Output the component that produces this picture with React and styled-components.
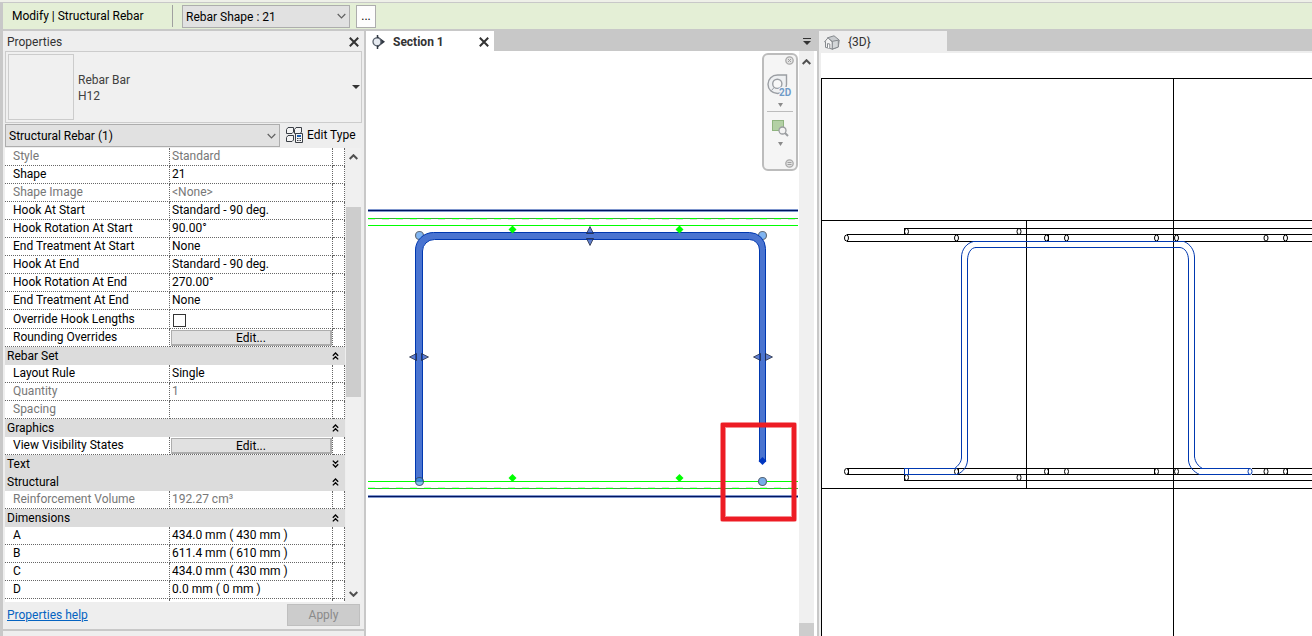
import React from 'react';
import styled, { createGlobalStyle } from 'styled-components';

const ROWS = [
  { name: 'Style', value: 'Standard', muted: true },
  { name: 'Shape', value: '21' },
  { name: 'Shape Image', value: '<None>', muted: true },
  { name: 'Hook At Start', value: 'Standard - 90 deg.' },
  { name: 'Hook Rotation At Start', value: '90.00°' },
  { name: 'End Treatment At Start', value: 'None' },
  { name: 'Hook At End', value: 'Standard - 90 deg.' },
  { name: 'Hook Rotation At End', value: '270.00°' },
  { name: 'End Treatment At End', value: 'None' },
  { name: 'Override Hook Lengths', type: 'check' },
  { name: 'Rounding Overrides', type: 'edit' },
  { group: 'Rebar Set', open: true },
  { name: 'Layout Rule', value: 'Single' },
  { name: 'Quantity', value: '1', muted: true },
  { name: 'Spacing', value: '', muted: true },
  { group: 'Graphics', open: true },
  { name: 'View Visibility States', type: 'edit' },
  { group: 'Text', open: false },
  { group: 'Structural', open: true },
  { name: 'Reinforcement Volume', value: '192.27 cm³', muted: true },
  { group: 'Dimensions', open: true },
  { name: 'A', value: '434.0 mm ( 430 mm )' },
  { name: 'B', value: '611.4 mm ( 610 mm )' },
  { name: 'C', value: '434.0 mm ( 430 mm )' },
  { name: 'D', value: '0.0 mm ( 0 mm )' },
  { name: '', value: '' },
];

const Chevron = ({ up, bold }) => (
  <svg width="9" height="6" viewBox="0 0 9 6" fill="none" stroke={bold ? '#505050' : '#606060'} strokeWidth={bold ? 2 : 1.2}>
    <path d={up ? 'M0.7 5 L4.5 1.2 L8.3 5' : 'M0.7 1 L4.5 4.8 L8.3 1'} />
  </svg>
);

const Caret = ({ size = 7, color = '#333' }) => (
  <svg width={size} height="4" viewBox="0 0 8 4" preserveAspectRatio="none">
    <path d="M0 0 H8 L4 4 Z" fill={color} />
  </svg>
);

const Cross = () => (
  <svg width="10" height="10" viewBox="0 0 10 10" stroke="#333" strokeWidth="2">
    <path d="M0.8 0.8 L9.2 9.2 M9.2 0.8 L0.8 9.2" />
  </svg>
);

const DoubleChevron = ({ open }) => (
  <svg width="7" height="8" viewBox="0 0 7 8" fill="none" stroke="#000" strokeWidth="1.3">
    <path d={open ? 'M0.8 3.7 L3.5 1 L6.2 3.7 M0.8 7.4 L3.5 4.7 L6.2 7.4' : 'M0.8 0.6 L3.5 3.3 L6.2 0.6 M0.8 4.3 L3.5 7 L6.2 4.3'} />
  </svg>
);

const EditTypeIcon = () => (
  <svg width="17" height="16" viewBox="0 0 17 16" fill="#f4f4f4" stroke="#3a3f46" strokeWidth="1">
    <path d="M0.5 2.5 L2 0.5 H7.5 V5 L6 6.5 H0.5 Z" />
    <path d="M8.5 2.5 L10 0.5 H15.5 V5 L14 6.5 H8.5 Z" />
    <path d="M0.5 10.5 L2 8.5 H7.5 V13 L6 14.5 H0.5 Z" />
    <path d="M9.5 6.5 H16.5 V15.5 H9.5 Z" />
    <path d="M11 9 H15" stroke="#1c5fb0" strokeWidth="2" />
    <path d="M11 11.5 H15 M11 13.5 H15" strokeDasharray="1 0.5" />
  </svg>
);

const SectionIcon = () => (
  <svg width="13" height="14" viewBox="0 0 13 14">
    <path d="M5.5 1.2 L13 6.8 L5.5 12.4 Z" fill="#2f3640" />
    <circle cx="5" cy="6.8" r="4" fill="#e6eaf0" stroke="#59616c" strokeWidth="1.3" />
    <path d="M5.5 0 V3 M5.5 10.6 V14" stroke="#2f3640" strokeWidth="1.5" />
  </svg>
);

const HouseIcon = () => (
  <svg width="16" height="15" viewBox="0 0 16 15" stroke="#85898d" strokeLinejoin="round">
    <path d="M3.5 2.8 L10 0.8 L15.2 5 L14.3 12 L8 14.2 L8.8 6.8 Z" fill="#c9cccf" />
    <path d="M8.3 6.3 L14.3 5.2 V12 L8 14.2 Z" fill="#d4d7d9" />
    <path d="M0.6 6.8 L4 2.8 L8.2 7 V14 L1.5 12.4 V6.6 Z" fill="#f2f2f2" />
    <path d="M3.5 12.8 V8.6 L5.8 9 V13.4" fill="#fff" />
  </svg>
);

const WheelIcon = () => (
  <svg width="26" height="24" viewBox="0 0 26 24" fill="none" stroke="#9b9ea3">
    <path d="M10.5 1 H19.5 V10.5 C19.5 16 15.5 19.5 10.5 19.5 C5 19.5 1 15.5 1 10.2 C1 5 5 1 10.5 1 Z" fill="#eef0f2" strokeWidth="1.4" />
    <circle cx="10.3" cy="9.8" r="4.6" fill="#f8f8f8" strokeWidth="1.4" />
    <path d="M7.3 13.3 L4.5 16.5 M13.3 13.3 L16 16" />
    <text x="12" y="22" fontFamily="Roboto, sans-serif" fontSize="10" fontWeight="700" fill="#6f9bc8" stroke="#f5f5f5" strokeWidth="2" paintOrder="stroke">2D</text>
  </svg>
);

const ZoomIcon = () => (
  <svg width="17" height="17" viewBox="0 0 17 17">
    <rect x="0.5" y="0.5" width="11" height="10" fill="#b3d0a5" stroke="#8fb47f" />
    <circle cx="10.5" cy="10.5" r="3.5" fill="#f3f3f3" stroke="#9a9da0" strokeWidth="1.3" />
    <path d="M13 13 L16 16" stroke="#9a9da0" strokeWidth="2" />
  </svg>
);

const RoundMark = ({ d }) => (
  <svg width="9" height="9" viewBox="0 0 9 9">
    <circle cx="4.5" cy="4.5" r="3.7" fill="#e2e2e2" stroke="#aaa" strokeWidth="1.3" />
    <path d={d} stroke="#a0a0a0" fill="none" />
  </svg>
);

const HorizontalRule = ({ y }) => (
  <>
    <path d={`M368 ${y} H798`} stroke="#7f96ce" strokeWidth="3" />
    <path d={`M368 ${y} H798`} stroke="#001560" />
  </>
);

const SectionDrawing = () => (
  <svg width="100%" height="100%" role="img" aria-label="Section 1">
    <g transform="translate(-366 -51)" fill="none">
      <g shapeRendering="crispEdges">
        <HorizontalRule y={210.5} />
        <HorizontalRule y={496.5} />
        <path d="M368 219.5 H798 M368 487.5 H798" stroke="#dcdcdc" strokeDasharray="7 7" />
        <path d="M368 218.5 H798 M368 225.5 H798 M368 481.5 H798 M368 488.5 H798" stroke="#00ff00" />
        <path d="M368 218.5 H798 M368 488.5 H798" stroke="#35b035" strokeDasharray="7 7" strokeDashoffset="7" />
      </g>
      {[[419.5, 235.5], [762.5, 235.5]].map(([x, y]) => (
        <circle key={x} cx={x} cy={y} r="4" fill="#80b5f2" stroke="#666f7a" strokeWidth="1.2" />
      ))}
      <path
        d="M415.5 481 V250 A18 17.5 0 0 1 433.5 232.5 H749.5 A16 16 0 0 1 765.5 248.5 V461.5 H759.5 V250 A10 10.5 0 0 0 749.5 239.5 H434.5 A12 11.5 0 0 0 422.5 251 V481 Z"
        fill="#4a74d0"
        stroke="#0038b0"
      />
      <circle cx="419.5" cy="481.5" r="4" fill="#4096e8" fillOpacity="0.65" stroke="#2c3a50" strokeOpacity="0.7" strokeWidth="1.2" />
      <circle cx="762.5" cy="481.5" r="4" fill="#78aee8" stroke="#566477" strokeWidth="1.2" />
      {[[512.5, 229.5], [679.5, 229.5], [512.5, 478], [679.5, 478]].map(([x, y]) => (
        <path key={`${x}-${y}`} d={`M${x} ${y - 4} L${x + 4} ${y} L${x} ${y + 4} L${x - 4} ${y} Z`} fill="#00ff00" />
      ))}
      <g fill="#1c49b8" fillOpacity="0.7" stroke="#20283c" strokeOpacity="0.75">
        <path d="M590 226.5 L593.5 233.5 H586.5 Z" />
        <path d="M590 245.5 L593.5 238.5 H586.5 Z" />
        {[419, 763].map((x) => (
          <path key={x} d={`M${x - 9.5} 357 L${x - 2.5} 353.5 V360.5 Z M${x + 9.5} 357 L${x + 2.5} 353.5 V360.5 Z`} />
        ))}
      </g>
      <path d="M762.5 457 L766.5 461 L762.5 465 L758.5 461 Z" fill="#0036c0" />
      <rect x="723" y="425" width="71" height="94" stroke="#ed1c24" strokeOpacity="0.5" strokeWidth="6" strokeLinejoin="round" />
      <rect x="723" y="425" width="71" height="94" stroke="#ed1c24" strokeWidth="4" />
    </g>
  </svg>
);

const RING_X = [956.5, 1046.5, 1066.5, 1156.5, 1176.5, 1266, 1285.5];

const ModelDrawing = () => (
  <svg width="100%" height="100%" role="img" aria-label="3D view">
    <g transform="translate(-821 -53)" fill="none" stroke="#000">
      <g shapeRendering="crispEdges">
        <path d="M821.5 2000 V78.5 H2400 M1173.5 78 V2000 M821 220.5 H2400 M1026.5 220 V488 M821 488.5 H2400" />
        <path d="M904.5 234 V228.5 H2400 M847 234.5 H2400 M847 241.5 H973 M1184 241.5 H2400" />
        <path d="M847 468.5 H904 M957 468.5 H1202 M1252 468.5 H2400 M847 474.5 H904 M957 474.5 H1199 M1252 474.5 H2400 M904.5 474 V480.5 H2400" />
        <path d="M848.5 468 V474 M958.5 468 V474 M1048.5 235 V241 M1048.5 468 V474 M1154.5 468 V474 M1287.5 468 V474" />
      </g>
      {[...RING_X, 846.5].map((x) => (
        <g key={x}>
          <ellipse cx={x} cy="238" rx="2" ry="3" />
          <ellipse cx={x} cy="471.5" rx="2" ry="3" />
        </g>
      ))}
      {[906.5, 1019].map((x) => (
        <g key={x}>
          <ellipse cx={x} cy="231.5" rx="2" ry="3" />
          <ellipse cx={x} cy="477.5" rx="2" ry="3" />
        </g>
      ))}
      <g stroke="#0038b0">
        <g shapeRendering="crispEdges">
          <path d="M973 241.5 H1184 M975 247.5 H1180" />
          <path d="M961.5 257 V458 M967.5 260 V461 M1188.5 260 V461 M1194.5 257 V457" />
          <path d="M957 468.5 H904.5 V474.5 H957 M908.5 468 V474 M1200 468.5 H1250 M1199 474.5 H1250" />
        </g>
        <path d="M973.5 241.5 C967 243 961.5 249 961.5 257.5 M976 247.5 C971 247.5 967.5 253 967.5 260.5" />
        <path d="M1184 241.5 C1190 244 1194.5 250 1194.5 257.5 M1180 247.5 C1185 248 1188.5 253 1188.5 260.5" />
        <path d="M961.5 457.5 C961.5 462 958 466 954.5 468.5 M967.5 460.5 C967 467 963 472 957 474.5" />
        <path d="M1188.5 460.5 C1189 467 1194 472 1199.5 474.5 M1194.5 456.5 C1195 462 1198 466 1202.5 468.5" />
        <ellipse cx="1250" cy="471.5" rx="2" ry="3" />
      </g>
    </g>
  </svg>
);

const PropertyValue = ({ row, id }) => {
  if (row.type === 'check') return <CheckBox id={id} type="checkbox" />;
  if (row.type === 'edit') return <EditButton id={id} type="button">Edit...</EditButton>;
  return row.value;
};

const PropertyRow = ({ row, id }) => {
  if (row.group) {
    return (
      <tr>
        <GroupCell colSpan="3" scope="rowgroup">
          <GroupTitle>{row.group}<DoubleChevron open={row.open} /></GroupTitle>
        </GroupCell>
      </tr>
    );
  }
  return (
    <tr>
      <NameCell scope="row" $muted={row.muted} $tall={row.type === 'check'}>
        {row.type ? <label htmlFor={id}>{row.name}</label> : row.name}
      </NameCell>
      <ValueCell $muted={row.muted} $flush={row.type === 'edit'}><PropertyValue row={row} id={id} /></ValueCell>
      <ValueCell />
    </tr>
  );
};

const PropertiesPanel = () => (
  <Panel>
    <PanelTitle>
      <span>Properties</span>
      <IconButton type="button" aria-label="Close properties"><Cross /></IconButton>
    </PanelTitle>
    <TypeSelector type="button">
      <Thumbnail />
      <TypeName>Rebar Bar<br />H12</TypeName>
      <Caret size={8} />
    </TypeSelector>
    <FilterRow>
      <SelectBox>
        <Select aria-label="Category" defaultValue="rebar">
          <option value="rebar">Structural Rebar (1)</option>
        </Select>
        <Chevron />
      </SelectBox>
      <EditType type="button"><EditTypeIcon />Edit Type</EditType>
    </FilterRow>
    <ScrollArea>
      <TableClip>
        <PropertyTable>
          <colgroup><NameCol /><col /><ExtraCol /></colgroup>
          <tbody>
            {ROWS.map((row, i) => <PropertyRow key={i} row={row} id={`property-${i}`} />)}
          </tbody>
        </PropertyTable>
      </TableClip>
      <ScrollBar>
        <ScrollButton type="button" aria-label="Scroll up"><Chevron up bold /></ScrollButton>
        <Track><Thumb /></Track>
        <ScrollButton type="button" aria-label="Scroll down"><Chevron bold /></ScrollButton>
      </ScrollBar>
    </ScrollArea>
    <PanelFooter>
      <HelpLink href="#help">Properties help</HelpLink>
      <ApplyButton type="button" disabled>Apply</ApplyButton>
    </PanelFooter>
    <BottomStrip />
  </Panel>
);

const App = () => (
  <>
    <GlobalStyle />
    <Window>
      <RibbonEdge />
      <OptionsBar>
        <Mode>Modify | Structural Rebar</Mode>
        <ShapeBox>
          <Select aria-label="Rebar Shape" defaultValue="21">
            <option value="21">Rebar Shape : 21</option>
          </Select>
          <Chevron />
        </ShapeBox>
        <BrowseButton type="button" aria-label="Browse shapes">...</BrowseButton>
      </OptionsBar>
      <Workspace>
        <PropertiesPanel />
        <SectionPane>
          <TabBar>
            <Tab $active>
              <SectionIcon />
              <TabTitle>Section 1</TabTitle>
              <IconButton type="button" aria-label="Close Section 1"><Cross /></IconButton>
            </Tab>
            <TabMenu type="button" aria-label="Tab list"><Caret size={8} /></TabMenu>
          </TabBar>
          <SectionBody>
            <Canvas>
              <SectionDrawing />
              <NavBar>
                <NavMark type="button" aria-label="Close navigation bar"><RoundMark d="M3 3 L6 6 M6 3 L3 6" /></NavMark>
                <NavButton type="button" aria-label="Steering wheel"><WheelIcon /><Caret size={5} color="#8a8a8a" /></NavButton>
                <NavLine />
                <NavButton type="button" aria-label="Zoom"><ZoomIcon /><Caret size={5} color="#8a8a8a" /></NavButton>
                <NavMark type="button" aria-label="Navigation options"><RoundMark d="M2.5 3.5 H6.5 M2.5 5.5 H6.5" /></NavMark>
              </NavBar>
            </Canvas>
            <ViewScroll>
              <ScrollButton type="button" aria-label="Scroll view up"><Chevron up bold /></ScrollButton>
              <ViewThumb />
            </ViewScroll>
          </SectionBody>
        </SectionPane>
        <ModelPane>
          <TabBar>
            <Tab><HouseIcon /><TabTitle>{'{3D}'}</TabTitle></Tab>
          </TabBar>
          <ModelBody><ModelDrawing /></ModelBody>
        </ModelPane>
      </Workspace>
    </Window>
  </>
);

export default App;

const GlobalStyle = createGlobalStyle`
  * {
    box-sizing: border-box;
  }

  body {
    margin: 0;
    color: #000;
    font: 12px/16px "Segoe UI", Roboto, "Open Sans", sans-serif;
  }

  button, select, input {
    margin: 0;
    font: inherit;
    color: inherit;
  }

  svg {
    display: block;
    flex: none;
  }
`;

const Window = styled.div`
  display: flex;
  flex-direction: column;
  height: 100vh;
  background: #c8c8c8;
`;

const RibbonEdge = styled.div`
  flex: none;
  height: 3px;
  background: #eef0e8;
  border-bottom: 1px solid #c8c8c8;
`;

const OptionsBar = styled.div`
  display: flex;
  align-items: center;
  flex: none;
  height: 26px;
  margin-left: 3px;
  padding-left: 9px;
  background: #e4efd6;
`;

const Mode = styled.span`
  width: 161px;
  line-height: 22px;
  white-space: nowrap;
  border-right: 1px solid #a0a0a0;
`;

const SelectBox = styled.div`
  display: grid;
  flex: 1;
  height: 23px;
  align-items: center;

  svg {
    grid-area: 1 / 1;
    justify-self: end;
    margin-right: 4px;
    pointer-events: none;
  }
`;

const ShapeBox = styled(SelectBox)`
  flex: 0 0 168px;
  margin: 0 6px 0 9px;
`;

const Select = styled.select`
  grid-area: 1 / 1;
  width: 100%;
  height: 100%;
  padding: 1px 3px 0;
  appearance: none;
  background: #e1e1e1;
  border: 1px solid #adadad;
  border-radius: 0;
`;

const BrowseButton = styled.button`
  width: 20px;
  height: 23px;
  padding: 0;
  background: #fdfdfd;
  border: 1px solid #adadad;
`;

const Workspace = styled.main`
  display: flex;
  flex: 1;
  min-height: 0;
  padding: 2px 0 0 3px;
`;

const Panel = styled.aside`
  display: flex;
  flex-direction: column;
  flex: none;
  width: 361px;
  padding: 0 2px;
  margin-right: 2px;
  background: #eee;
`;

const PanelTitle = styled.div`
  display: flex;
  align-items: center;
  justify-content: space-between;
  flex: none;
  height: 20px;
  padding: 2px 3px 0 2px;
  color: #333;
`;

const IconButton = styled.button`
  padding: 0;
  background: none;
  border: 0;
`;

const TypeSelector = styled.button`
  display: flex;
  align-items: center;
  flex: none;
  height: 72px;
  padding: 0 1px 0 2px;
  text-align: left;
  background: #f0f0f0;
  border: 1px solid #ccc;
`;

const Thumbnail = styled.span`
  width: 66px;
  height: 66px;
  border: 1px solid #ccc;
`;

const TypeName = styled.span`
  flex: 1;
  padding: 2px 0 0 4px;
  color: #404040;
`;

const FilterRow = styled.div`
  display: flex;
  align-items: center;
  flex: none;
  height: 25px;
`;

const EditType = styled.button`
  display: flex;
  align-items: center;
  gap: 4px;
  flex: 0 0 82px;
  padding: 0 0 2px 6px;
  white-space: nowrap;
  background: none;
  border: 0;
`;

const ScrollArea = styled.div`
  display: flex;
  flex: 1;
  gap: 1px;
  min-height: 0;
  padding-right: 1px;
`;

const TableClip = styled.div`
  flex: 1;
  overflow: hidden;
  background: #fff;
`;

const PropertyTable = styled.table`
  width: 100%;
  table-layout: fixed;
  border-collapse: separate;
  border-spacing: 0;
`;

const NameCol = styled.col`
  width: 165px;
`;

const ExtraCol = styled.col`
  width: 12px;
`;

const NameCell = styled.th`
  height: ${({ $tall }) => ($tall ? 19 : 18)}px;
  padding: 0 0 1px 8px;
  font-weight: 400;
  text-align: left;
  white-space: nowrap;
  color: ${({ $muted }) => ($muted ? '#777' : '#000')};
  border-right: 1px dotted #666;
  border-bottom: 1px dotted #666;
`;

const ValueCell = styled.td`
  padding: 0 0 ${({ $flush }) => ($flush ? '0 1px' : '1px 2px')};
  white-space: nowrap;
  color: ${({ $muted }) => ($muted ? '#777' : '#000')};
  border-right: 1px dotted #666;
  border-bottom: 1px dotted #666;
`;

const GroupCell = styled.th`
  height: 18px;
  padding: 0 6px 0 2px;
  font-weight: 400;
  background: #dcdcdc;
`;

const GroupTitle = styled.span`
  display: flex;
  align-items: center;
  justify-content: space-between;
`;

const CheckBox = styled.input`
  display: block;
  width: 13px;
  height: 13px;
  margin: 3px 0 0 1px;
  appearance: none;
  background: #fff;
  border: 1px solid #333;
`;

const EditButton = styled.button`
  display: block;
  width: 100%;
  height: 16px;
  padding: 1px 0 0;
  line-height: 12px;
  background: #e1e1e1;
  border: solid #adadad;
  border-width: 1px 2px 2px 1px;
`;

const ScrollBar = styled.div`
  display: flex;
  flex-direction: column;
  width: 15px;
  background: #f0f0f0;
`;

const ScrollButton = styled.button`
  display: flex;
  align-items: center;
  justify-content: center;
  height: 17px;
  padding: 0;
  background: none;
  border: 0;
`;

const Track = styled.div`
  display: grid;
  grid-template-rows: 42fr 190fr 188fr;
  flex: 1;
`;

const Thumb = styled.div`
  grid-row: 2;
  background: #cdcdcd;
`;

const PanelFooter = styled.div`
  display: flex;
  align-items: center;
  justify-content: space-between;
  flex: none;
  height: 27px;
  padding: 0 2px 2px;
`;

const HelpLink = styled.a`
  color: #0563c1;
`;

const ApplyButton = styled.button`
  width: 73px;
  height: 22px;
  padding: 0;
  color: #8a8a8a;
  background: #ccc;
  border: 1px solid #bfbfbf;
`;

const BottomStrip = styled.div`
  flex: none;
  height: 7px;
  margin: 0 -2px;
  border-top: 2px solid #c8c8c8;
`;

const SectionPane = styled.section`
  display: flex;
  flex-direction: column;
  flex: 453 1 0;
  min-width: 0;
`;

const ModelPane = styled(SectionPane)`
  flex-grow: 493;
`;

const TabBar = styled.div`
  display: flex;
  align-items: center;
  justify-content: space-between;
  flex: none;
  height: 20px;
`;

const Tab = styled.div`
  display: flex;
  align-items: center;
  gap: 8px;
  width: 128px;
  height: 100%;
  padding: ${({ $active }) => ($active ? '2px 5px 0 6px' : '2px 5px 0')};
  color: #333;
  font-weight: ${({ $active }) => ($active ? 700 : 400)};
  background: ${({ $active }) => ($active ? '#fff' : '#eee')};
`;

const TabTitle = styled.span`
  flex: 1;
`;

const TabMenu = styled.button`
  margin-right: 8px;
  padding: 2px 0 0;
  background: none;
  border: 0;
  border-top: 1px solid #333;
`;

const SectionBody = styled.div`
  display: flex;
  flex: 1;
  min-height: 0;
  margin-right: 2px;
  background: #fff;
`;

const Canvas = styled.div`
  position: relative;
  flex: 1;
  min-width: 0;
`;

const NavBar = styled.div`
  position: absolute;
  top: 2px;
  right: 1px;
  display: flex;
  flex-direction: column;
  align-items: center;
  width: 36px;
  height: 118px;
  background: #f5f5f5;
  border: 2px solid #bcbcbc;
  border-radius: 6px;
`;

const NavMark = styled.button`
  align-self: flex-end;
  padding: 1px 2px;
  background: none;
  border: 0;

  &:last-child {
    margin-top: auto;
  }
`;

const NavButton = styled.button`
  display: flex;
  flex-direction: column;
  align-items: center;
  gap: 5px;
  padding: 8px 0 4px;
  background: none;
  border: 0;
`;

const NavLine = styled.span`
  width: 26px;
  height: 1px;
  background: #bcbcbc;
`;

const ViewScroll = styled.div`
  display: flex;
  flex-direction: column;
  justify-content: space-between;
  width: 15px;
  margin-right: 3px;
  padding-top: 2px;
  background: #f0f0f0;
`;

const ViewThumb = styled.div`
  height: 13px;
  background: #cdcdcd;
`;

const ModelBody = styled.div`
  flex: 1;
  min-height: 0;
  padding: 2px 0 0 2px;
  background: #eee;

  > svg {
    background: #fff;
  }
`;
